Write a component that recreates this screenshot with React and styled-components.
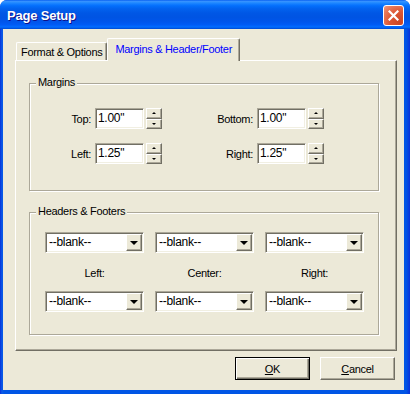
import React from 'react';
import styled, { createGlobalStyle } from 'styled-components';

const GlobalStyle = createGlobalStyle`
  html, body {
    margin: 0;
    padding: 0;
    background: #ffffff;
  }
  body {
    font-family: "Liberation Sans", Arial, sans-serif;
    font-size: 11px;
    letter-spacing: -0.3px;
    color: #000;
  }
  * { box-sizing: border-box; }
`;

// window frame + title bar
const Window = styled.div`
  width: 410px;
  height: 394px;
  display: flex;
  flex-direction: column;
  background: linear-gradient(to right, #0831d9 0, #0a5ae8 2px, #0055e5 4px, #0055e5 calc(100% - 4px), #0831d9 100%);
  border-radius: 7px 7px 0 0;
  overflow: hidden;
`;

const TitleBar = styled.div`
  height: 29px;
  flex: none;
  display: flex;
  justify-content: space-between;
  padding: 0 6px 0 7px;
  background: linear-gradient(to bottom, #0058ee 0%, #3a93ff 4%, #288eff 8%, #127dff 14%, #036ffc 20%, #0262ee 30%, #0057e5 45%, #0054e3 60%, #0055eb 75%, #005bf5 85%, #026afe 92%, #0062ef 96%, #0043cf 100%);
`;

const Title = styled.div`
  align-self: center;
  margin-top: 1px;
  color: #fff;
  font-weight: bold;
  font-size: 13px;
  letter-spacing: -0.2px;
  text-shadow: 1px 1px 0 #0f1089;
`;

const CloseButton = styled.div`
  margin-top: 5px;
  width: 21px;
  height: 21px;
  border: 1px solid #fff;
  border-radius: 3px;
  background: radial-gradient(circle at 85% 85%, #cc4624 0%, #dc5532 45%, #e97c5d 80%, #f09a80 100%);
  display: flex;
  align-items: center;
  justify-content: center;
`;

const Client = styled.div`
  flex: 1;
  margin: 0 6px 4px 3px;
  background: #ece9d8;
  padding: 9px 7px 0 12px;
  display: flex;
  flex-direction: column;
`;

// tabs
const TabStrip = styled.div`
  display: flex;
  align-items: flex-end;
  height: 22px;
  padding-left: 1px;
`;

const Tab = styled.div`
  position: relative;
  z-index: ${p => (p.$active ? 2 : 1)};
  height: ${p => (p.$active ? '23px' : '18px')};
  margin-bottom: ${p => (p.$active ? '-1px' : '0')};
  padding: ${p => (p.$active ? '0 7px' : '0 4px')};
  display: flex;
  align-items: center;
  padding-bottom: ${p => (p.$active ? '2px' : '0')};
  background: #ece9d8;
  color: ${p => (p.$active ? '#0000ff' : '#000')};
  border-top: 1px solid #fff;
  border-left: 1px solid #fff;
  border-right: 1px solid #716f64;
  border-radius: 2px 2px 0 0;
  box-shadow: inset -1px 0 0 #aca899;
  white-space: nowrap;
`;

const Panel = styled.div`
  height: 291px;
  flex: none;
  display: flex;
  flex-direction: column;
  gap: 21px;
  padding: 22px 17px 0 13px;
  border: 1px solid;
  border-color: #fff #716f64 #716f64 #fff;
  box-shadow: inset -1px -1px 0 #aca899;
`;

// group boxes
const GroupBox = styled.div`
  position: relative;
  height: ${p => p.$height}px;
  border: 1px solid #aca899;
  box-shadow: inset 1px 1px 0 #fff, 1px 1px 0 #fff;
  padding: ${p => p.$padding};
`;

const Legend = styled.div`
  position: absolute;
  top: -8px;
  left: 6px;
  padding: 0 2px;
  line-height: 13px;
  background: #ece9d8;
`;

const FieldRows = styled.div`
  display: flex;
  flex-direction: column;
  gap: 14px;
`;

const FieldRow = styled.div`
  display: flex;
`;

const Field = styled.div`
  display: flex;
  align-items: center;
`;

const FieldLabel = styled.div`
  width: ${p => p.$width}px;
  text-align: right;
  margin-right: 4px;
  padding-top: 1px;
`;

const TextBox = styled.div`
  width: 49px;
  height: 21px;
  background: #fff;
  border: 1px solid;
  border-color: #aca899 #fff #fff #aca899;
  box-shadow: inset 1px 1px 0 #716f64, inset -1px -1px 0 #f1efe2;
  padding: 3px 0 0 2px;
  line-height: 13px;
  font-size: 12px;
`;

const Spinner = styled.div`
  margin-left: 2px;
  width: 16px;
  height: 21px;
  display: flex;
  flex-direction: column;
`;

const SpinButton = styled.div`
  flex: 1;
  display: flex;
  align-items: center;
  justify-content: center;
  border: 1px solid;
  border-color: #fff #716f64 #716f64 #fff;
  box-shadow: inset -1px -1px 0 #aca899;
  background: #ece9d8;
`;

const Arrow = styled.div`
  width: 0;
  height: 0;
  border-left: ${p => p.$size}px solid transparent;
  border-right: ${p => p.$size}px solid transparent;
  ${p => (p.$up ? 'border-bottom' : 'border-top')}: ${p => p.$size}px solid #000;
`;

const DropGrid = styled.div`
  display: grid;
  grid-template-columns: repeat(3, 99px);
  grid-template-rows: 21px 38px 21px;
  column-gap: 11px;
`;

const DropDown = styled.div`
  display: flex;
  height: 21px;
  background: #fff;
  border: 1px solid;
  border-color: #aca899 #fff #fff #aca899;
  box-shadow: inset 1px 1px 0 #716f64, inset -1px -1px 0 #f1efe2;
  padding: 1px 1px 1px 1px;
`;

const DropText = styled.div`
  flex: 1;
  padding: 2px 0 0 2px;
  line-height: 13px;
  font-size: 12px;
`;

const DropButton = styled.div`
  width: 16px;
  display: flex;
  align-items: center;
  justify-content: center;
  border: 1px solid;
  border-color: #fff #716f64 #716f64 #fff;
  box-shadow: inset -1px -1px 0 #aca899;
  background: #ece9d8;
`;

const PosLabel = styled.div`
  display: flex;
  align-items: center;
  justify-content: center;
  padding-top: 1px;
`;

// dialog buttons
const ButtonRow = styled.div`
  display: flex;
  justify-content: flex-end;
  gap: 10px;
  margin: 6px 2px 0 0;
`;

const Button = styled.div`
  width: 75px;
  height: 23px;
  display: flex;
  align-items: center;
  justify-content: center;
  background: #ece9d8;
  border: 1px solid;
  border-color: ${p => (p.$default ? '#000' : '#fff #716f64 #716f64 #fff')};
  box-shadow: ${p =>
    p.$default
      ? 'inset 1px 1px 0 #fff, inset -1px -1px 0 #716f64, inset -2px -2px 0 #aca899'
      : 'inset -1px -1px 0 #aca899'};
`;

const SpinField = ({ label, width, value }) => (
  <Field>
    <FieldLabel $width={width}>{label}</FieldLabel>
    <TextBox>{value}</TextBox>
    <Spinner>
      <SpinButton><Arrow $up $size={2} /></SpinButton>
      <SpinButton><Arrow $size={2} /></SpinButton>
    </Spinner>
  </Field>
);

const Select = ({ value }) => (
  <DropDown>
    <DropText>{value}</DropText>
    <DropButton><Arrow $size={4} /></DropButton>
  </DropDown>
);

const App = () => (
  <>
    <GlobalStyle />
    <Window>
      <TitleBar>
        <Title>Page Setup</Title>
        <CloseButton>
          <svg width="11" height="11" viewBox="0 0 11 11">
            <path d="M1.5 1.5 L9.5 9.5 M9.5 1.5 L1.5 9.5" stroke="#fff" strokeWidth="2.2" strokeLinecap="square" />
          </svg>
        </CloseButton>
      </TitleBar>
      <Client>
        <TabStrip>
          <Tab>Format &amp; Options</Tab>
          <Tab $active>Margins &amp; Header/Footer</Tab>
        </TabStrip>
        <Panel>
          <GroupBox $height={108} $padding="24px 0 0 11px">
            <Legend>Margins</Legend>
            <FieldRows>
              <FieldRow>
                <SpinField label="Top:" width={50} value={'1.00"'} />
                <SpinField label="Bottom:" width={91} value={'1.00"'} />
              </FieldRow>
              <FieldRow>
                <SpinField label="Left:" width={50} value={'1.25"'} />
                <SpinField label="Right:" width={91} value={'1.25"'} />
              </FieldRow>
            </FieldRows>
          </GroupBox>
          <GroupBox $height={123} $padding="19px 0 0 15px">
            <Legend>Headers &amp; Footers</Legend>
            <DropGrid>
              <Select value="--blank--" />
              <Select value="--blank--" />
              <Select value="--blank--" />
              <PosLabel>Left:</PosLabel>
              <PosLabel>Center:</PosLabel>
              <PosLabel>Right:</PosLabel>
              <Select value="--blank--" />
              <Select value="--blank--" />
              <Select value="--blank--" />
            </DropGrid>
          </GroupBox>
        </Panel>
        <ButtonRow>
          <Button $default><span><u>O</u>K</span></Button>
          <Button><span><u>C</u>ancel</span></Button>
        </ButtonRow>
      </Client>
    </Window>
  </>
);

export default App;
